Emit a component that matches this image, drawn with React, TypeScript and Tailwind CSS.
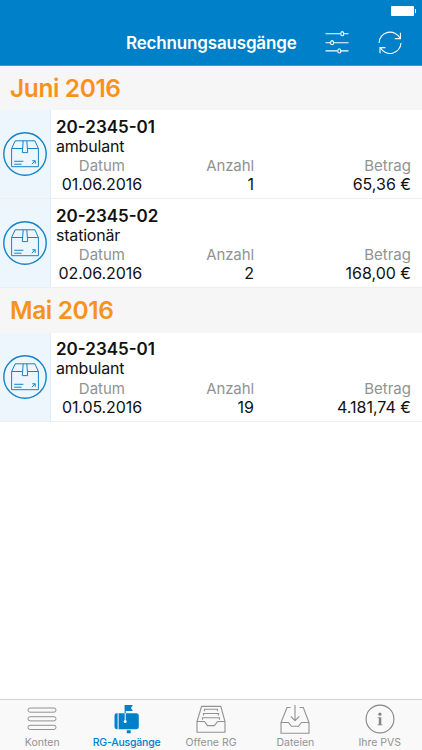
import type { ReactNode } from 'react'

interface Invoice {
  number: string
  type: string
  date: string
  count: string
  amount: string
}

const groups: { month: string; invoices: Invoice[] }[] = [
  {
    month: 'Juni 2016',
    invoices: [
      { number: '20-2345-01', type: 'ambulant', date: '01.06.2016', count: '1', amount: '65,36 €' },
      { number: '20-2345-02', type: 'stationär', date: '02.06.2016', count: '2', amount: '168,00 €' }
    ]
  },
  {
    month: 'Mai 2016',
    invoices: [
      { number: '20-2345-01', type: 'ambulant', date: '01.05.2016', count: '19', amount: '4.181,74 €' }
    ]
  }
]

const FilterIcon = () => (
  <svg width="24" height="24" viewBox="0 0 24 24" fill="none" stroke="white" strokeWidth="1.1">
    <path d="M.5 2.7H15.7M19 2.7H23.5M.5 11.7H5.5M8.8 11.7H23.5M.5 19.9H12.6M15.9 19.9H23.5" />
    <ellipse cx="17.3" cy="2.7" rx="1.5" ry="2.1" />
    <ellipse cx="7.1" cy="11.7" rx="1.5" ry="2.1" />
    <ellipse cx="14.3" cy="19.9" rx="1.5" ry="2.1" />
  </svg>
)

const RefreshIcon = () => (
  <svg width="24" height="24" viewBox="0 0 24 24" fill="none" stroke="white" strokeWidth="1.1">
    <path d="M1.1 12A11 11 0 0 1 22 7.3M22.4 1.8V7.6H16.8" />
    <path d="M23 12A11 11 0 0 1 2.4 16.8M2 22.2V16.6H7.4" />
  </svg>
)

const PackageIcon = () => (
  <svg width="44" height="44" viewBox="0 0 44 44" fill="none" stroke="#1683c4" strokeWidth="1">
    <circle cx="22" cy="22" r="21.2" strokeWidth="1.4" />
    <path d="M8.6 16.5V34.7H35.4V16.5L31.9 8.8H12.2ZM8.6 16.5H19.3M24.7 16.5H35.4" />
    <path d="M20.2 8.8L19.3 20.6H24.7L23.8 8.8" />
    <path d="M11.2 29.3H20.4M11.2 32.2H18.6M28.8 32.2L32.2 28.8M29.2 28.8H32.2V31.8" />
  </svg>
)

const MenuIcon = () => (
  <svg width="30" height="30" viewBox="0 0 30 30" fill="none" stroke="#929292" strokeWidth="1">
    <rect x="1" y="4" width="28" height="4.2" rx="2.1" />
    <rect x="1" y="12.7" width="28" height="4.2" rx="2.1" />
    <rect x="1" y="21.3" width="28" height="4.2" rx="2.1" />
  </svg>
)

const MailboxIcon = () => (
  <svg width="30" height="30" viewBox="0 0 30 30" fill="#0080c8">
    <path d="M5.6 9.3V25.2H4.8Q2.5 25.2 2.5 22.8V12Q2.5 9.3 4.8 9.3Z" />
    <path d="M6.6 9.3H24.2Q26.8 9.3 26.8 12V22.8Q26.8 25.2 24.2 25.2H6.6Z" />
    <path d="M12.6 1H20.8L19 4L20.8 7H13.8V9.3H12.6ZM14.8 26.2H18.7V29.2H14.8Z" />
    <path d="M13.2 9V17" stroke="white" strokeWidth="1" />
    <circle cx="13.2" cy="17.5" r="1.5" fill="white" />
  </svg>
)

const DocumentsTrayIcon = () => (
  <svg width="30" height="30" viewBox="0 0 30 30" fill="none" stroke="#929292" strokeWidth="1.1">
    <path d="M1 17.5L5.6 2.4H24.8L29 17.5V28.3H1Z" />
    <path d="M1 17.5H8.5L11.5 21.6H18.5L21.5 17.5H29" />
    <path d="M8.5 7.3V5.3H21.5V7.3M7.5 11.5V9.5H22.5V11.5M6.5 15.8V13.7H23.5V15.8" />
  </svg>
)

const DownloadTrayIcon = () => (
  <svg width="30" height="30" viewBox="0 0 30 30" fill="none" stroke="#929292" strokeWidth="1.1">
    <path d="M10.5 3.5H7L1 18.5V29.2H29V18.5L23.3 3.5H19.5" />
    <path d="M1 18.5H8.5L11.5 22.3H18.5L21.5 18.5H29M15 1V16.5M10.7 12.3L15 16.6L19.3 12.3" />
  </svg>
)

const InfoIcon = () => (
  <svg width="30" height="30" viewBox="0 0 30 30" fill="none" stroke="#858585" strokeWidth="1.1">
    <circle cx="15" cy="15" r="13.9" />
    <circle cx="14.9" cy="10.2" r="1.6" fill="#858585" stroke="none" />
    <path d="M12.6 13.2H16.3V20.4H17.6V21.3H12.5V20.4H13.8V14.1H12.6Z" fill="#858585" stroke="none" />
  </svg>
)

const tabs: { label: string; icon: ReactNode; active?: boolean }[] = [
  { label: 'Konten', icon: <MenuIcon /> },
  { label: 'RG-Ausgänge', icon: <MailboxIcon />, active: true },
  { label: 'Offene RG', icon: <DocumentsTrayIcon /> },
  { label: 'Dateien', icon: <DownloadTrayIcon /> },
  { label: 'Ihre PVS', icon: <InfoIcon /> }
]

const InvoiceRow = ({ invoice }: { invoice: Invoice }) => (
  <div className="flex h-[89px] border-b border-[#eeeeef]">
    <div className="flex w-[51px] shrink-0 items-center justify-center border-r border-[#e1ebf3] bg-[#edf6fd]">
      <PackageIcon />
    </div>
    <div className="flex-1 pl-[5px] pt-[7.7px] pr-[11px] text-[16px] leading-[19.2px] text-[#111]">
      <div className="text-[17px] font-semibold">{invoice.number}</div>
      <div className="tracking-[-0.2px]">{invoice.type}</div>
      <div className="flex text-right text-[15px] text-[#929292]">
        <span className="w-[69px]">Datum</span>
        <span className="w-[129px] tracking-[-0.1px]">Anzahl</span>
        <span className="flex-1">Betrag</span>
      </div>
      <div className="flex text-right">
        <span className="w-[86px] tracking-[-0.1px]">{invoice.date}</span>
        <span className="w-[112px]">{invoice.count}</span>
        <span className="flex-1">{invoice.amount}</span>
      </div>
    </div>
  </div>
)

const App = () => {
  return (
    <div className="flex h-[750px] w-[422px] flex-col overflow-hidden bg-white font-['Inter','Liberation_Sans',sans-serif]">
      <header className="flex h-[65.5px] shrink-0 flex-col border-b border-[#3c9bd2] bg-[#0080c8]">
        {/* Status bar */}
        <div className="flex h-[21px] shrink-0 items-end justify-end pr-[6px] pb-[5px]">
          <div className="h-[10px] w-[23px] rounded-[1px] bg-white"></div>
          <div className="mb-[3px] ml-px h-1 w-px bg-white"></div>
        </div>
        <div className="flex h-[43px] items-center pl-[126px]">
          <h1 className="w-[199px] pt-[3px] text-[17px] font-semibold tracking-[-0.17px] whitespace-nowrap text-white">
            Rechnungsausgänge
          </h1>
          <FilterIcon />
          <div className="ml-[29px]">
            <RefreshIcon />
          </div>
        </div>
      </header>

      <main className="flex-1">
        {groups.map((group) => (
          <section key={group.month}>
            <h2 className="h-[44.5px] bg-[#f6f6f6] pl-[10px] text-[24.5px] leading-[44px] font-semibold tracking-[-0.4px] text-[#fa921a]">
              {group.month}
            </h2>
            {group.invoices.map((invoice) => (
              <InvoiceRow key={invoice.number} invoice={invoice} />
            ))}
          </section>
        ))}
      </main>

      <nav className="flex h-[51px] shrink-0 justify-between border-t border-[#d2d2d2] bg-[#f9f9f9]">
        {tabs.map((tab) => (
          <div
            key={tab.label}
            className={`flex w-[84.4px] flex-col items-center pt-[4px] text-[10.5px] leading-[18px] whitespace-nowrap ${
              tab.active ? 'font-medium tracking-[-0.2px] text-[#0080c8]' : 'text-[#929292]'
            }`}
          >
            <div className="h-[30px] shrink-0">{tab.icon}</div>
            <span>{tab.label}</span>
          </div>
        ))}
      </nav>
    </div>
  )
}

export default App
